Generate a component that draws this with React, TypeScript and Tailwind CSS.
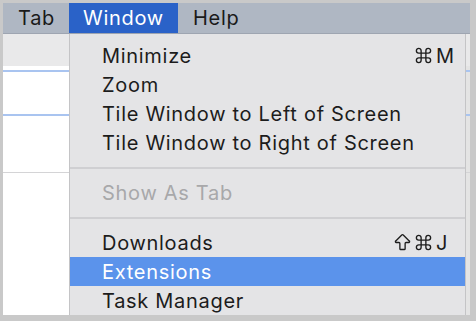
import { ArrowBigUp, Command } from "lucide-react";

type Row =
  | { kind: "item"; label: string; shift?: boolean; keyChar?: string; disabled?: boolean; active?: boolean }
  | { kind: "sep" };

const rows: Row[] = [
  { kind: "item", label: "Minimize", keyChar: "M" },
  { kind: "item", label: "Zoom" },
  { kind: "item", label: "Tile Window to Left of Screen" },
  { kind: "item", label: "Tile Window to Right of Screen" },
  { kind: "sep" },
  { kind: "item", label: "Show As Tab", disabled: true },
  { kind: "sep" },
  { kind: "item", label: "Downloads", shift: true, keyChar: "J" },
  { kind: "item", label: "Extensions", active: true },
  { kind: "item", label: "Task Manager" },
];

function MenuRow({ row }: { row: Row }) {
  if (row.kind === "sep") {
    return (
      <div className="flex h-[21px] items-center">
        <div className="h-[2px] w-full bg-[#cfcfd2]" />
      </div>
    );
  }
  const color = row.active ? "bg-[#5b93eb] text-white" : row.disabled ? "text-[#a8a8aa]" : "text-[#1c1c1c]";
  return (
    <div className={`flex h-[29px] items-center pl-[32px] pr-[7px] ${color}`}>
      <span className="flex-1">{row.label}</span>
      {row.keyChar && (
        <>
          {row.shift && <ArrowBigUp size={21} strokeWidth={1.5} className="mr-[1px]" />}
          <Command size={19} strokeWidth={1.7} className="mr-[3px]" />
          <span className="w-[22px]">{row.keyChar}</span>
        </>
      )}
    </div>
  );
}

export default function App() {
  return (
    <div className="relative h-[321px] w-[476px] overflow-hidden bg-[#c9c9c9] pb-[6px] pl-[3px] pr-[6px] pt-[3px] font-['Inter',sans-serif] text-[20px] leading-none tracking-[0.7px]">
      <div className="flex h-full flex-col bg-white">
        <div className="flex h-[31px] shrink-0 items-center border-b border-[#9ea5b1] bg-[#afb7c3] text-[#1a1a1a]">
          <span className="w-[66px] pl-[15px]">Tab</span>
          <span className="flex h-full w-[109px] items-center justify-center bg-[#2a62c8] text-white">Window</span>
          <span className="pl-[15px]">Help</span>
        </div>
        <div className="flex flex-1 flex-col bg-gradient-to-r from-white from-40% to-[#e4e4e4] to-[14%]">
          <div className="h-[32px] bg-[#e9e9ea]" />
          <div className="h-[4px]" />
          <div className="h-[2px] bg-[#a9c4f0]" />
          <div className="h-[42px]" />
          <div className="h-[2px] bg-[#a9c4f0]" />
          <div className="h-[56px]" />
          <div className="h-[1px] bg-[#d4d4d6]" />
        </div>
      </div>

      <div className="absolute left-[69px] top-[34px] flex h-[281px] w-[397px] flex-col border-x border-[#c4c4c6] bg-[#e4e4e6] pt-[7px]">
        {rows.map((r, i) => (
          <MenuRow key={i} row={r} />
        ))}
      </div>
    </div>
  );
}
